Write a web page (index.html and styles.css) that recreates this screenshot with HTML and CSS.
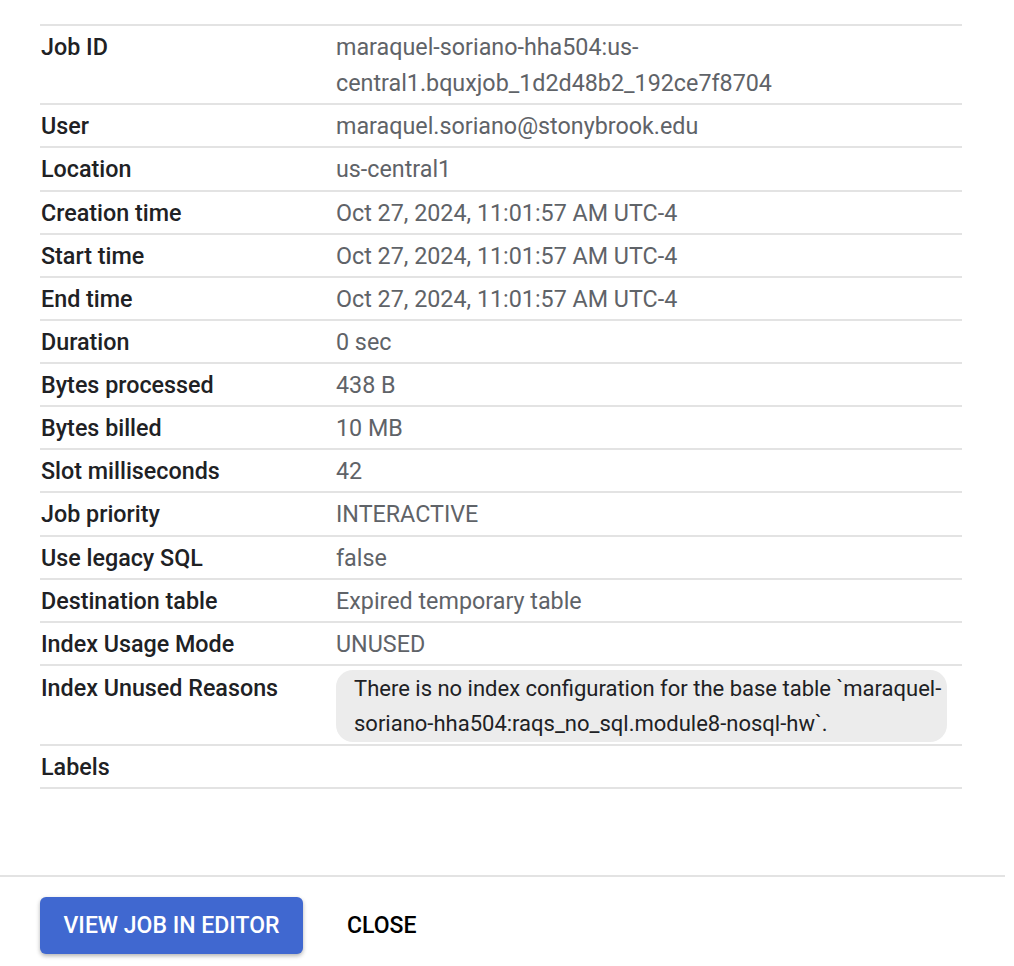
FILE: index.html
```html
<!DOCTYPE html>
<html>
<head>
<meta charset="utf-8">
<link rel="stylesheet" href="styles.css">
</head>
<body>
<div class="page">
  <div class="content">
    <div class="details">
      <div class="row"><div class="key">Job ID</div><div class="val">maraquel-soriano-hha504:us-<br>central1.bquxjob_1d2d48b2_192ce7f8704</div></div>
      <div class="row"><div class="key">User</div><div class="val">maraquel.soriano@stonybrook.edu</div></div>
      <div class="row"><div class="key">Location</div><div class="val">us-central1</div></div>
      <div class="row"><div class="key">Creation time</div><div class="val">Oct 27, 2024, 11:01:57 AM UTC-4</div></div>
      <div class="row"><div class="key">Start time</div><div class="val">Oct 27, 2024, 11:01:57 AM UTC-4</div></div>
      <div class="row"><div class="key">End time</div><div class="val">Oct 27, 2024, 11:01:57 AM UTC-4</div></div>
      <div class="row"><div class="key">Duration</div><div class="val">0 sec</div></div>
      <div class="row"><div class="key">Bytes processed</div><div class="val">438 B</div></div>
      <div class="row"><div class="key">Bytes billed</div><div class="val">10 MB</div></div>
      <div class="row"><div class="key">Slot milliseconds</div><div class="val">42</div></div>
      <div class="row"><div class="key">Job priority</div><div class="val">INTERACTIVE</div></div>
      <div class="row"><div class="key">Use legacy SQL</div><div class="val">false</div></div>
      <div class="row"><div class="key">Destination table</div><div class="val">Expired temporary table</div></div>
      <div class="row"><div class="key">Index Usage Mode</div><div class="val">UNUSED</div></div>
      <div class="row row-chip"><div class="key">Index Unused Reasons</div><div class="val"><div class="chip">There is no index configuration for the base table `maraquel-<br>soriano-hha504:raqs_no_sql.module8-nosql-hw`.</div></div></div>
      <div class="row"><div class="key">Labels</div><div class="val"></div></div>
    </div>
  </div>
  <div class="footer">
    <button class="btn btn-primary">VIEW JOB IN EDITOR</button>
    <button class="btn btn-text">CLOSE</button>
  </div>
</div>
</body>
</html>
```

FILE: styles.css
```css
html, body {
  margin: 0;
  padding: 0;
  background: #ffffff;
}
body {
  font-family: Roboto, "Noto Sans", Arial, sans-serif;
  width: 1014px;
  height: 966px;
  overflow: hidden;
}
.page {
  width: 1005px;
}
.content {
  padding: 24px 43px 0 40px;
  height: 850px;
  box-sizing: border-box;
}
.details {
  border-top: 2px solid #e3e3e3;
}
.row {
  display: grid;
  grid-template-columns: 296px 1fr;
  border-bottom: 2px solid #e3e3e3;
  padding: 3px 0 2px 0;
  font-size: 23.3px;
  line-height: 36.12px;
}
.key {
  color: #202124;
  font-weight: 500;
  padding-left: 1px;
}
.val {
  color: #5f6368;
  min-height: 36px;
}
.row-chip {
  padding: 4px 0 2px 0;
}
.chip {
  background: #ececec;
  border-radius: 17px;
  color: #202124;
  padding: 1px 0 1px 18px;
  line-height: 35px;
  width: 611px;
  box-sizing: border-box;
  font-size: 22px;
  white-space: nowrap;
}
.footer {
  border-top: 2px solid #e3e3e3;
  margin-top: 25px;
  padding: 20px 0 0 40px;
  display: flex;
  align-items: center;
  gap: 44px;
}
.btn {
  font-family: Roboto, "Noto Sans", Arial, sans-serif;
  font-size: 23px;
  font-weight: 500;
  border: none;
  cursor: pointer;
}
.btn-primary {
  background: #4068d0;
  color: #ffffff;
  width: 263px;
  height: 57px;
  border-radius: 6px;
  box-shadow: 0 2px 4px rgba(0,0,0,0.3);
}
.btn-text {
  background: transparent;
  color: #000000;
  padding: 0;
}
```
